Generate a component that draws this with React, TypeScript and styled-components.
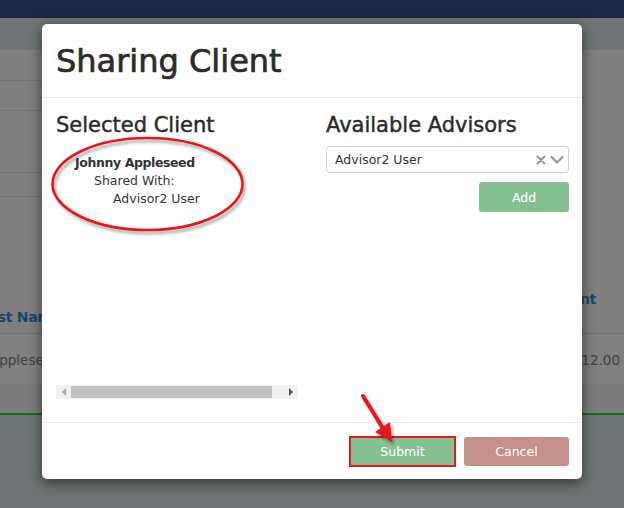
import React from "react";
import styled, { createGlobalStyle } from "styled-components";

const Global = createGlobalStyle`
  html, body { margin: 0; padding: 0; }
  body {
    width: 624px; height: 508px; overflow: hidden;
    font-family: "DejaVu Sans", "Liberation Sans", sans-serif;
    background: #6e7574;
  }
`;

const Page = styled.div`
  position: relative;
  width: 624px;
  height: 508px;
  overflow: hidden;
  display: flex;
  flex-direction: column;
  background: #6e7574;
`;

const TopBar = styled.div`
  height: 18px;
  background: #1b2744;
  flex: none;
`;

const Band = styled.div`
  height: 32px;
  background: #6e7574;
  flex: none;
`;

const Content = styled.div`
  background: #7f7f7f;
  display: flex;
  flex-direction: column;
  border-bottom: 2px solid #1f6a26;
  flex: none;
`;

const ListRow = styled.div<{ h: number }>`
  height: ${(p) => p.h}px;
  width: 300px;
  border-bottom: 1px solid #727272;
  box-sizing: border-box;
`;

const Spacer = styled.div<{ h: number }>`
  height: ${(p) => p.h}px;
`;

const TableRow = styled.div<{ h: number; bg?: string; line?: boolean }>`
  height: ${(p) => p.h}px;
  display: flex;
  justify-content: space-between;
  background: ${(p) => p.bg || "transparent"};
  border-bottom: ${(p) => (p.line ? "1px solid #6f6f6f" : "none")};
  box-sizing: border-box;
  margin-left: -20px;
  margin-right: -2px;
`;

const HeadCell = styled.span<{ top: number; right?: number }>`
  font-family: "DejaVu Sans", sans-serif;
  font-weight: bold;
  font-size: 14px;
  line-height: 18px;
  color: #1d4670;
  letter-spacing: -0.3px;
  padding-top: ${(p) => p.top}px;
  margin-right: ${(p) => p.right || 0}px;
`;

const BodyCell = styled.span<{ right?: number; left?: number }>`
  font-family: "DejaVu Sans", sans-serif;
  font-size: 13.5px;
  line-height: 18px;
  padding-top: 17px;
  color: #3c4247;
  margin-right: ${(p) => p.right || 0}px;
  margin-left: ${(p) => p.left || 0}px;
`;

const Overlay = styled.div`
  position: absolute;
  inset: 0;
  display: flex;
  justify-content: flex-start;
  align-items: flex-start;
  padding: 24px 0 0 42px;
  box-sizing: border-box;
`;

const Modal = styled.div`
  width: 540px;
  height: 455px;
  background: #fff;
  border-radius: 5px;
  box-shadow: 0 4px 14px rgba(0, 0, 0, 0.55);
  display: flex;
  flex-direction: column;
  overflow: hidden;
`;

const Header = styled.div`
  height: 74px;
  border-bottom: 1px solid #e8e8e8;
  box-sizing: border-box;
  padding: 16px 14px 0 14px;
  display: flex;
  align-items: flex-start;
`;

const Title = styled.h1`
  margin: 0;
  font-family: "DejaVu Sans", sans-serif;
  font-weight: normal;
  font-size: 32px;
  line-height: 42px;
  color: #2b2b2b;
  letter-spacing: 0px;
  -webkit-text-stroke: 0.7px #2b2b2b;
`;

const Body = styled.div`
  flex: 1;
  display: grid;
  grid-template-columns: 242px 243px;
  column-gap: 28px;
  padding: 13px 14px 0 14px;
`;

const Column = styled.div`
  display: flex;
  flex-direction: column;
`;

const SectionTitle = styled.h2`
  margin: 0;
  font-family: "DejaVu Sans", sans-serif;
  font-weight: normal;
  font-size: 21px;
  line-height: 28px;
  color: #2b2b2b;
  -webkit-text-stroke: 0.45px #2b2b2b;
`;

const ClientInfo = styled.div`
  flex: 1;
  display: flex;
  flex-direction: column;
  padding: 15px 0 0 19px;
  font-family: "DejaVu Sans", sans-serif;
  font-size: 12.5px;
  line-height: 18px;
  color: #333;
`;

const Line = styled.div<{ indent: number; bold?: boolean }>`
  padding-left: ${(p) => p.indent}px;
  font-weight: ${(p) => (p.bold ? "bold" : "normal")};
  letter-spacing: ${(p) => (p.bold ? "-0.4px" : "0px")};
`;

const ScrollBar = styled.div`
  height: 14px;
  background: #f1f1f1;
  display: flex;
  align-items: center;
  margin-bottom: 23px;
`;

const Arrow = styled.div<{ dir: "left" | "right"; color: string }>`
  width: 15px;
  flex: none;
  display: flex;
  justify-content: center;
  &::before {
    content: "";
    border-top: 4px solid transparent;
    border-bottom: 4px solid transparent;
    ${(p) =>
      p.dir === "left"
        ? `border-right: 4px solid ${p.color};`
        : `border-left: 4px solid ${p.color};`}
  }
`;

const Thumb = styled.div`
  flex: none;
  width: 201px;
  height: 12px;
  background: #c1c1c1;
`;

const Track = styled.div`
  flex: 1;
`;

const Select = styled.div`
  margin-top: 7px;
  height: 27px;
  border: 1px solid #d0d0d0;
  border-radius: 4px;
  box-sizing: border-box;
  display: flex;
  align-items: center;
  padding: 0 4px 0 8px;
  font-family: "DejaVu Sans", sans-serif;
  font-size: 12.5px;
  color: #333;
`;

const SelectValue = styled.span`
  flex: 1;
`;

const IconBox = styled.span`
  display: flex;
  align-items: center;
  margin-left: 4px;
`;

const BtnRow = styled.div<{ top: number }>`
  display: flex;
  justify-content: flex-end;
  gap: 9px;
  margin-top: ${(p) => p.top}px;
`;

const Button = styled.button<{ bg: string; w: number; h: number; marked?: boolean }>`
  width: ${(p) => p.w}px;
  height: ${(p) => p.h}px;
  background: ${(p) => p.bg};
  border: none;
  border-radius: 3px;
  color: #fff;
  font-family: "DejaVu Sans", sans-serif;
  font-size: 12.5px;
  padding: 0;
  ${(p) =>
    p.marked
      ? `outline: 2px solid #e8141c; outline-offset: 0; border-radius: 0; margin-top: 1px; margin-right: 1px;`
      : ""}
`;

const Footer = styled.div`
  height: 57px;
  border-top: 1px solid #ececec;
  box-sizing: border-box;
  padding: 14px 13px 0 0;
`;

const Annotations = styled.svg`
  position: absolute;
  left: 0;
  top: 0;
  pointer-events: none;
`;

export default function App() {
  return (
    <>
      <Global />
      <Page>
        <TopBar />
        <Band />
        <Content>
          <ListRow h={31} />
          <ListRow h={30} />
          <ListRow h={62} />
          <ListRow h={24} />
          <Spacer h={89} />
          <TableRow h={48} line>
            <HeadCell top={22}>Last Name</HeadCell>
            <HeadCell top={4} right={30}>
              Amount
            </HeadCell>
          </TableRow>
          <TableRow h={50} bg="#808080">
            <BodyCell left={10}>Appleseed</BodyCell>
            <BodyCell right={6}>$1,912.00</BodyCell>
          </TableRow>
          <TableRow h={29} bg="#7b7b7b" />
        </Content>

        <Overlay>
          <Modal>
            <Header>
              <Title>Sharing Client</Title>
            </Header>
            <Body>
              <Column>
                <SectionTitle>Selected Client</SectionTitle>
                <ClientInfo>
                  <Line indent={0} bold>
                    Johnny Appleseed
                  </Line>
                  <Line indent={19}>Shared With:</Line>
                  <Line indent={38}>Advisor2 User</Line>
                </ClientInfo>
                <ScrollBar>
                  <Arrow dir="left" color="#a8a8a8" />
                  <Thumb />
                  <Track />
                  <Arrow dir="right" color="#505050" />
                </ScrollBar>
              </Column>
              <Column>
                <SectionTitle>Available Advisors</SectionTitle>
                <Select>
                  <SelectValue>Advisor2 User</SelectValue>
                  <IconBox>
                    <svg width="10" height="10" viewBox="0 0 10 10">
                      <path d="M1.5 1.5 L8.5 8.5 M8.5 1.5 L1.5 8.5" stroke="#999" strokeWidth="2" strokeLinecap="round" />
                    </svg>
                  </IconBox>
                  <IconBox>
                    <svg width="14" height="10" viewBox="0 0 14 10">
                      <path d="M1.5 2 L7 7.5 L12.5 2" stroke="#999" strokeWidth="2.4" fill="none" strokeLinecap="round" strokeLinejoin="round" />
                    </svg>
                  </IconBox>
                </Select>
                <BtnRow top={9}>
                  <Button bg="#88c191" w={90} h={30}>
                    Add
                  </Button>
                </BtnRow>
              </Column>
            </Body>
            <Footer>
              <BtnRow top={0}>
                <Button bg="#88c191" w={103} h={27} marked>
                  Submit
                </Button>
                <Button bg="#c4918a" w={105} h={29}>
                  Cancel
                </Button>
              </BtnRow>
            </Footer>
          </Modal>
        </Overlay>

        <Annotations width="624" height="508" viewBox="0 0 624 508">
          <defs>
            <filter id="sh" x="-20%" y="-20%" width="140%" height="140%">
              <feDropShadow dx="2" dy="3" stdDeviation="1.5" floodColor="#000" floodOpacity="0.35" />
            </filter>
          </defs>
          <ellipse cx="147.5" cy="184" rx="95" ry="46" fill="none" stroke="#e8141c" strokeWidth="2.6" filter="url(#sh)" />
          <g filter="url(#sh)">
            <line x1="363" y1="396" x2="384" y2="430" stroke="#e8141c" strokeWidth="4" strokeLinecap="round" />
            <polygon points="392,442 375,432 390,422" fill="#e8141c" />
          </g>
        </Annotations>
      </Page>
    </>
  );
}
